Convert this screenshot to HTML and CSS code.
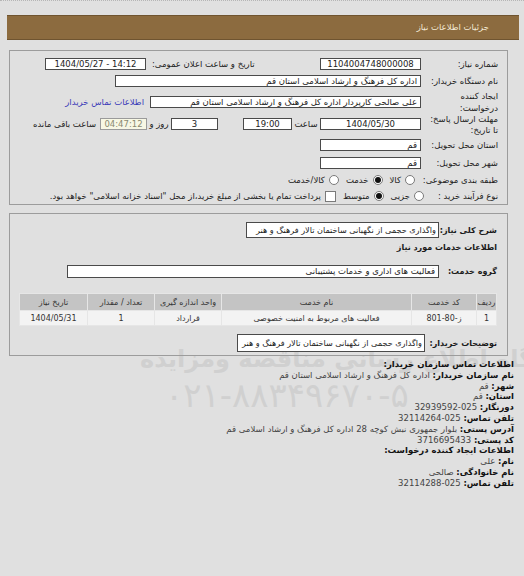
FILE: index.html
```html
<!DOCTYPE html>
<html lang="fa" dir="rtl">
<head>
<meta charset="utf-8">
<title>جزئیات اطلاعات نیاز</title>
<link rel="stylesheet" href="styles.css">
</head>
<body>
<div class="page">
  <div class="titlebar">جزئیات اطلاعات نیاز</div>

  <div class="box box1">
    <div class="row r1">
      <div class="lbl">شماره نیاز:</div>
      <div class="inp w101 c" dir="ltr">1104004748000008</div>
      <div class="lbl2">تاریخ و ساعت اعلان عمومی:</div>
      <div class="inp w101 c" dir="ltr">1404/05/27 - 14:12</div>
    </div>
    <div class="row r2">
      <div class="lbl">نام دستگاه خریدار:</div>
      <div class="inp w306">اداره کل فرهنگ و ارشاد اسلامی استان قم</div>
    </div>
    <div class="row r3">
      <div class="lbl l2">ایجاد کننده<br>درخواست:</div>
      <div class="inp w271">علی صالحی کارپردار اداره کل فرهنگ و ارشاد اسلامی استان قم</div>
      <a class="link">اطلاعات تماس خریدار</a>
    </div>
    <div class="row r4">
      <div class="lbl l3">مهلت ارسال پاسخ:<br>تا تاریخ:</div>
      <div class="inp w101 c top">1404/05/30</div>
      <div class="txt t-hour top">ساعت</div>
      <div class="inp w49 c top">19:00</div>
      <div class="inp w47 c top gap25">3</div>
      <div class="txt t-day top">روز و</div>
      <div class="inp w47 c top remain">04:47:12</div>
      <div class="txt t-rem top">ساعت باقی مانده</div>
    </div>
    <div class="row r5">
      <div class="lbl">استان محل تحویل:</div>
      <div class="inp w101">قم</div>
    </div>
    <div class="row r6">
      <div class="lbl">شهر محل تحویل:</div>
      <div class="inp w101">قم</div>
    </div>
    <div class="row r7">
      <div class="lbl l7">طبقه بندی موضوعی:</div>
      <div class="opt"><span class="radio"></span><span>کالا</span></div>
      <div class="opt"><span class="radio on"></span><span>خدمت</span></div>
      <div class="opt"><span class="radio"></span><span>کالا/خدمت</span></div>
    </div>
    <div class="row r8">
      <div class="lbl l8">نوع فرآیند خرید :</div>
      <div class="opt"><span class="radio"></span><span>جزیی</span></div>
      <div class="opt"><span class="radio on"></span><span>متوسط</span></div>
      <div class="opt"><span class="check"></span><span>پرداخت تمام یا بخشی از مبلغ خرید،از محل "اسناد خزانه اسلامی" خواهد بود.</span></div>
    </div>
  </div>

  <div class="box box2">
    <div class="row ra">
      <div class="blbl w58">شرح کلی نیاز:</div>
      <div class="inp w193 h16 fit">واگذاری حجمی از نگهبانی ساختمان تالار فرهنگ و هنر</div>
    </div>
    <div class="row rb">
      <div class="blbl">اطلاعات خدمات مورد نیاز</div>
    </div>
    <div class="row rc">
      <div class="blbl w58">گروه خدمت:</div>
      <div class="inp w372 h13">فعالیت های اداری و خدمات پشتیبانی</div>
    </div>
    <table class="grid">
      <thead>
        <tr>
          <th class="c1">ردیف</th>
          <th class="c2">کد خدمت</th>
          <th class="c3">نام خدمت</th>
          <th class="c4">واحد اندازه گیری</th>
          <th class="c5">تعداد / مقدار</th>
          <th class="c6">تاریخ نیاز</th>
        </tr>
      </thead>
      <tbody>
        <tr>
          <td>1</td>
          <td>ز-80-801</td>
          <td>فعالیت های مربوط به امنیت خصوصی</td>
          <td>قرارداد</td>
          <td>1</td>
          <td>1404/05/31</td>
        </tr>
      </tbody>
    </table>
    <div class="row rd">
      <div class="blbl w72">توضیحات خریدار:</div>
      <div class="inp w188 h18 fit">واگذاری حجمی از نگهبانی ساختمان تالار فرهنگ و هنر</div>
    </div>
  </div>

  <div class="contact">
    <div><b>اطلاعات تماس سازمان خریدار:</b></div>
    <div><b>نام سازمان خریدار:</b> <span>اداره کل فرهنگ و ارشاد اسلامی استان قم</span></div>
    <div><b>شهر:</b> <span>قم</span></div>
    <div><b>استان:</b> <span>قم</span></div>
    <div><b>دورنگار:</b> <span>025-32939592</span></div>
    <div><b>تلفن تماس:</b> <span>025-32114264</span></div>
    <div><b>آدرس پستی:</b> <span>بلوار جمهوری نبش کوچه 28 اداره کل فرهنگ و ارشاد اسلامی قم</span></div>
    <div><b>کد پستی:</b> <span>3716695433</span></div>
    <div><b>اطلاعات ایجاد کننده درخواست:</b></div>
    <div><b>نام:</b> <span>علی</span></div>
    <div><b>نام خانوادگی:</b> <span>صالحی</span></div>
    <div><b>تلفن تماس:</b> <span>025-32114288</span></div>
  </div>

  <div class="wm wm1">پایگاه اطلاع رسانی مناقصه ومزایده</div>
  <div class="wm wm2">۰۲۱-۸۸۳۴۹۶۷۰-۵</div>
</div>
</body>
</html>
```

FILE: styles.css
```css
* { box-sizing: border-box; }
html, body { margin: 0; padding: 0; }
body {
  width: 524px;
  height: 576px;
  overflow: hidden;
  background: #e0e0e0;
  font-family: "DejaVu Sans", sans-serif;
  font-size: 8.5px;
  color: #222;
  direction: rtl;
  border-top: 1px dotted #b5b5b5;
}
.page { position: relative; padding-top: 14px; height: 575px; }

.titlebar {
  margin: 0 5px 0 7px;
  height: 25px;
  background: #8c6b3f;
  border-top: 1px solid #6f5430;
  border-bottom: 1px solid #6f5430;
  color: #f3ead6;
  padding-right: 30px;
  line-height: 23px;
  font-size: 8.5px;
}

.box {
  border: 1px solid #9c9c9c;
  margin: 10px 16px 0 9px;
  position: relative;
  z-index: 1;
}
.box1 { height: 155px; padding: 4px 9px 0 0; }
.box2 { margin-top: 8px; padding: 8px 10px 3px 0; }

.row { display: flex; align-items: center; white-space: nowrap; }
.r1 { height: 17px; }
.r2 { height: 18px; }
.r3 { height: 24px; }
.r4 { height: 22px; align-items: flex-start; }
.r5 { height: 18px; }
.r6 { height: 17px; }
.r7 { height: 17px; }
.r8 { height: 16px; }

.lbl { width: 77px; flex: none; }
.l2 { line-height: 12px; }
.l3 { line-height: 11px; }
.l7 { width: 83px; }
.l8 { width: 74px; }
.lbl2 { width: 174px; flex: none; text-align: left; padding-left: 6px; }

.inp {
  flex: none;
  height: 12px;
  border: 1px solid #4a4a4a;
  background: #fff;
  line-height: 10px;
  padding: 0 3px;
  overflow: hidden;
  white-space: nowrap;
  color: #222;
}
.c { text-align: center; }
.top { margin-top: 4px; }
.w101 { width: 101px; }
.w306 { width: 306px; }
.w271 { width: 271px; }
.w49 { width: 49px; }
.w47 { width: 47px; }
.gap25 { margin-right: 25px; }
.remain { background: #f7f7e4; color: #8a8a70; border-color: #9a9a9a; }

.txt { flex: none; line-height: 12px; }
.t-hour { width: 28px; text-align: center; }
.t-day { width: 24px; text-align: center; }
.t-rem { margin-right: 4px; }

.link { color: #3a3ab8; margin-right: 6px; }

.opt { display: flex; align-items: center; gap: 4px; margin-left: 7px; }
.radio {
  width: 10px; height: 10px;
  border-radius: 50%;
  border: 1px solid #7a7a7a;
  background: #fff;
  position: relative;
  flex: none;
}
.radio.on::after {
  content: "";
  position: absolute;
  left: 1px; top: 1px;
  width: 6px; height: 6px;
  border-radius: 50%;
  background: #111;
}
.check {
  width: 11px; height: 11px;
  border: 1px solid #7a7a7a;
  background: #fff;
  flex: none;
}

.blbl { font-weight: bold; flex: none; color: #1a1a1a; font-size: 8px; }
.w58 { width: 58px; }
.w72 { width: 72px; }
.w193 { width: 193px; }
.w372 { width: 372px; }
.w188 { width: 188px; }
.h16 { height: 16px; line-height: 14px; }
.h13 { height: 13px; line-height: 11px; }
.h18 { height: 18px; line-height: 16px; }
.fit { font-size: 8.1px; padding: 0 2px; }

.ra { height: 16px; }
.rb { height: 18px; }
.rc { height: 19px; margin-top: 6px; }
.rd { height: 18px; margin-top: 8px; }

.grid {
  margin-top: 12px;
  width: 477px;
  border-collapse: collapse;
  table-layout: fixed;
  font-size: 8px;
}
.grid th, .grid td {
  border: 1px solid #e6e6e6;
  text-align: center;
  font-weight: normal;
  padding: 0;
  white-space: nowrap;
  overflow: hidden;
}
.grid th { background: #c4c4c4; height: 17px; color: #333; }
.grid td { background: #f3f3f3; height: 15px; color: #333; }
.c1 { width: 20px; }
.c2 { width: 65px; }
.c3 { width: 190px; }
.c4 { width: 67px; }
.c5 { width: 67px; }
.c6 { width: 68px; }

.contact {
  position: relative;
  z-index: 1;
  margin: 3px 10px 0 0;
  line-height: 10.8px;
  font-size: 8.5px;
}
.contact b { color: #111; }
.contact span { color: #444; }

.wm {
  position: absolute;
  z-index: 0;
  color: #d0d0d0;
  white-space: nowrap;
  font-family: "DejaVu Sans", sans-serif;
}
.wm1 { top: 344px; left: 140px; font-size: 24px; font-weight: bold; }
.wm2 { top: 374px; left: 165px; font-size: 34px; direction: ltr; }
```
